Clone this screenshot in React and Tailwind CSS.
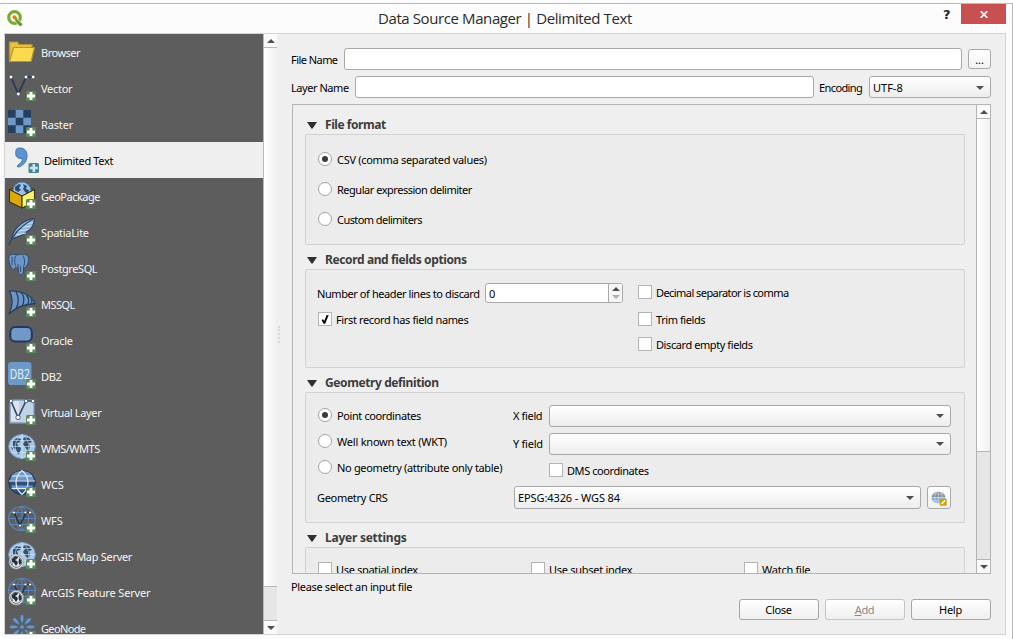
import React from "react";

const Plus = () => (
  <g>
    <rect x="18" y="17" width="10" height="10" rx="1.5" fill="#5a8c5a" />
    <path d="M23 18v8M19 22h8" stroke="#fff" strokeWidth="2.800" />
  </g>
);

const Continents = () => (
  <path
    d="M5 7l4-3 4 1-1 3-3 1 1 3 3 2-1 4-2 3-2-5-3-3zM16 3l5 1 3 4-3 1 1 4-2 4-3-4-2-3 2-3-2-1zM3 12l2 3-1 1z"
    fill="#32506f"
  />
);

const Globe = () => (
  <g>
    <ellipse cx="14" cy="12.5" rx="13.3" ry="12" fill="#a9c8e8" stroke="#6f98c8" />
    <Continents />
    <path d="M1 12.5h26M3 6.5h22M3 18.5h22M14 .5v24M14 .5c-9 7-9 17 0 24M14 .5c9 7 9 17 0 24" stroke="#d5e5f5" strokeWidth=".6" fill="none" />
  </g>
);

const WireGlobe = () => (
  <g fill="none">
    <ellipse cx="14" cy="12.5" rx="13.3" ry="12" stroke="#5c86bd" strokeWidth="1.2" />
    <path d="M1 12.5h26M3 6.5h22M3 18.5h22M14 .5v24M14 .5c-9 7-9 17 0 24M14 .5c9 7 9 17 0 24" stroke="#5c86bd" strokeWidth="1" />
    <path d="M6 6.5l6 13 6-13h5" stroke="#25364d" strokeWidth="1.7" />
    <g fill="#fff"><circle cx="6" cy="6.5" r="1.1" /><circle cx="12" cy="19.5" r="1.1" /><circle cx="17.5" cy="6.5" r="1.1" /><circle cx="22" cy="6.5" r="1.1" /></g>
  </g>
);

const EsriBadge = () => (
  <g>
    <circle cx="8.3" cy="19.8" r="7.2" fill="#f2f2f2" stroke="#9a9a9a" strokeWidth=".8" />
    <circle cx="8.3" cy="19.8" r="5.6" fill="#e8edf2" stroke="#3b4652" strokeWidth=".8" />
    <path d="M4 17l3-2.500 3 .5-1 2-2 1 2 1 1 2-2 3-2-3-2-1zM11 16l2 2 .5 3-2 2-1-3zM3.400 20l2 3-1-.6z" fill="#22303f" />
  </g>
);

const icons = {
  folder: (
    <g strokeLinejoin="round">
      <path d="M1.500 20.500V4h8l1.500 2.500h13v4" fill="#e8c33f" stroke="#b8952c" strokeWidth="1.200" />
      <path d="M1.500 23.500L5.500 9.500h21l-3.500 14z" fill="#fcd94f" stroke="#b8952c" strokeWidth="1.200" />
      <path d="M1.500 4v19" stroke="#b8952c" strokeWidth="1.200" />
    </g>
  ),
  vector: (
    <g>
      <path d="M3 3l7.300 17L18 3h7" fill="none" stroke="#2b3b52" strokeWidth="1.900" />
      <g fill="#fff" stroke="#39485e" strokeWidth=".8"><circle cx="3" cy="3" r="1.900" /><circle cx="10.300" cy="20" r="1.900" /><circle cx="18" cy="3" r="1.900" /><circle cx="25.200" cy="3" r="1.900" /></g>
      <Plus />
    </g>
  ),
  raster: (
    <g>
      <path d="M0 0h23v23H0z" fill="#7099c8" />
      <path d="M0 0h7.700v7.700H0zM15.300 0H23v7.700h-7.700zM7.700 7.700h7.600v7.600H7.700zM0 15.300h7.700V23H0zM15.300 15.300H23V23h-7.700z" fill="#25405f" />
      <Plus />
    </g>
  ),
  comma: (
    <g>
      <path d="M6 2.600C9 1.200 15.600 2 16 8.500c.3 6.500-3 10.500-8 12.500-1.600.5-2.300-1-1-2 3.200-2 4.500-4 4.300-6.500-4.300.5-6.800-2-6.600-5C4.800 5.500 5 3.500 6 2.600z" fill="#5b94d2" stroke="#3c6ea8" strokeWidth=".9" />
      <rect x="17.500" y="17" width="10.500" height="10" rx="1.500" fill="#45858c" />
      <path d="M22.800 18v8M18.800 22h8" stroke="#c8e6f6" strokeWidth="2.600" />
    </g>
  ),
  geopackage: (
    <g strokeLinejoin="round">
      <path d="M1.500 7.500L14 3l12.500 4.500L14 14z" fill="#8a6a00" stroke="#4a3b05" />
      <circle cx="14" cy="9" r="9" fill="#9dc1e6" stroke="#4f78a8" strokeWidth=".8" />
      <path d="M7 5l4-3 2 1-2 3 2 2-3 2-3-2zM15 2l4 2-1 3 3 1-1 4-3-2-2-3 1-2zM9 12l3 1v3z" fill="#2b4c75" />
      <path d="M1.500 7.500V20L14 26V14z" fill="#dba908" stroke="#3d3208" strokeWidth="1.100" />
      <path d="M26.500 7.500V20L14 26V14z" fill="#fdf373" stroke="#3d3208" strokeWidth="1.100" />
      <Plus />
    </g>
  ),
  feather: (
    <g>
      <path d="M4 20C5 11 14 3 26 0c.5 6-1 10-6 13-4 2.600-8 6-14 7z" fill="#8eb4dc" stroke="#2a4566" strokeWidth="1.200" />
      <path d="M8 17l10-2M10 13l10-1.500M13 9.500l10-1.500M17 6l8-1.500" stroke="#d9e8f6" strokeWidth="1" />
      <path d="M.8 27C4 18 13 8 25 1" stroke="#2a4566" strokeWidth="1.300" fill="none" />
      <Plus />
    </g>
  ),
  elephant: (
    <g stroke="#2c4870" strokeWidth="1" fill="#6c96c6" strokeLinejoin="round">
      <path d="M1 2c2-2.500 6-2 8-1 3-1 9-1.500 11 1 1.500 3 .5 8-2 11-1 1.500-2 1-2.400 0V18c0 3-4.600 3.500-5 .5L10 13c-1 1.500-2 1-2.500.5-1 2-3 2.500-4 .5C1 10 0 5 1 2z" />
      <path d="M8 1.500c-2 3-1.500 8 0 11M15 1.500c2 3 2 8 .6 11M10 13v-3M4 3v8M12.500 12v6" fill="none" strokeWidth=".9" />
      <g stroke="none"><Plus /></g>
    </g>
  ),
  mssql: (
    <g>
      <path d="M1.500.8C12 .5 23 4 27 13.500 18 14 9 16 1 24c4-8 4.500-15 .5-23.200z" fill="#6b95c6" stroke="#24405f" strokeWidth="1.300" />
      <path d="M8 1.500c3 6 3 12 0 17M13.500 2.500c3 4.500 3 8.500 1 13M18.500 5c2.500 3 2.600 6 1.500 9.500M23 8.500c1 2 1.200 3.500.8 5.200" stroke="#24405f" strokeWidth="1.300" fill="none" />
      <Plus />
    </g>
  ),
  oracle: (
    <g>
      <rect x="2.300" y="1" width="21.500" height="14.500" rx="5" fill="#7397c9" stroke="#203a5c" strokeWidth="2" />
      <Plus />
    </g>
  ),
  db2: (
    <g>
      <rect x="0" y="0" width="23.500" height="23" rx="3" fill="#6c99c8" />
      <text x="11.800" y="17" textAnchor="middle" fontSize="14.500" letterSpacing="0" fill="#eef4fa" fontFamily="Open Sans" textLength="20" lengthAdjust="spacingAndGlyphs">DB2</text>
      <Plus />
    </g>
  ),
  virtual: (
    <g>
      <rect x="2" y="2" width="24" height="23" fill="#c3d3e6" stroke="#7a9cc4" strokeWidth="1.300" />
      <path d="M3 3h8v20H3z" fill="#dde4ee" />
      <path d="M3 3l7 16.500L18 3h7" fill="none" stroke="#334c6d" strokeWidth="1.700" />
      <g fill="#fff" stroke="#39485e" strokeWidth=".8"><circle cx="3" cy="3" r="1.800" /><circle cx="10" cy="19.500" r="2.200" /><circle cx="18" cy="3" r="1.800" /><circle cx="25" cy="3" r="1.800" /></g>
      <Plus />
    </g>
  ),
  wms: (<g><Globe /><Plus /></g>),
  wcs: (
    <g>
      <ellipse cx="14" cy="12.500" rx="13.300" ry="12" fill="#2b507c" stroke="#1f3450" />
      <path d="M2 10.500C3 4 8 1 14 1s11 3 12 9.500zM3 15.500h22l-2 4H5z" fill="#6d98ca" />
      <path d="M1 11h26M3.500 18.500h21M14 .5c-8 7-8 17 0 24M14 .5c8 7 8 17 0 24M4 6h20" stroke="#e3edf7" strokeWidth="1.200" fill="none" />
      <Plus />
    </g>
  ),
  wfs: (<g><WireGlobe /><Plus /></g>),
  arcmap: (<g><Globe /><EsriBadge /><Plus /></g>),
  arcfeature: (<g><WireGlobe /><EsriBadge /><Plus /></g>),
  geonode: (
    <g>
      <g fill="#6b97cb" stroke="#3d6797" strokeWidth=".6">
        {[0, 45, 90, 135, 180, 225, 270, 315].map((a) => (
          <path key={a} d="M14 9.500c-2.200-2.500-2.500-9 0-9s2.200 6.500 0 9z" transform={`rotate(${a} 14 13)`} />
        ))}
      </g>
      <circle cx="14" cy="13" r="2" fill="#5f8fc8" />
      <Plus />
    </g>
  ),
};

const sources = [
  ["Browser", "folder", "tracking-[-0.5px]"],
  ["Vector", "vector", "tracking-[-0.3px]"],
  ["Raster", "raster", ""],
  ["Delimited Text", "comma", "tracking-[-0.35px]"],
  ["GeoPackage", "geopackage", "tracking-[-0.5px]"],
  ["SpatiaLite", "feather", "tracking-[-0.3px]"],
  ["PostgreSQL", "elephant", "tracking-[-0.4px]"],
  ["MSSQL", "mssql", "tracking-[-0.55px]"],
  ["Oracle", "oracle", "tracking-[-0.3px]"],
  ["DB2", "db2", "tracking-[-0.4px]"],
  ["Virtual Layer", "virtual", "tracking-[-0.35px]"],
  ["WMS/WMTS", "wms", "tracking-[-0.5px]"],
  ["WCS", "wcs", ""],
  ["WFS", "wfs", ""],
  ["ArcGIS Map Server", "arcmap", "tracking-[-0.3px]"],
  ["ArcGIS Feature Server", "arcfeature", ""],
  ["GeoNode", "geonode", "tracking-[-0.65px]"],
];

const Arrow = ({ up, faded }) => (
  <svg width="8" height="4" viewBox="0 0 8 4" className="block shrink-0">
    <path d={up ? "M0 4L4 0l4 4z" : "M0 0h8L4 4z"} fill={faded ? "#b0b0b0" : "#4f4f4f"} />
  </svg>
);

const Radio = ({ checked }) => (
  <span className="flex size-[14px] shrink-0 items-center justify-center rounded-full border border-[#a3a3a3] bg-white">
    {checked && <span className="size-[6px] rounded-full bg-[#3a3a3a]" />}
  </span>
);

const Check = ({ checked }) => (
  <span className="flex size-[14px] shrink-0 items-center justify-center border border-[#b4b4b4] bg-white">
    {checked && (
      <svg width="8" height="9" viewBox="0 0 8 9">
        <path d="M.5 5l1.500-.8L3.300 6 5.500.3 7.700 0 4.200 8.800H2.600z" fill="#000" />
      </svg>
    )}
  </span>
);

const Option = ({ kind, checked, children, className = "" }) => (
  <label className={`flex items-center whitespace-nowrap ${className}`}>
    {kind === "radio" ? <Radio checked={checked} /> : <Check checked={checked} />}
    <span className={kind === "radio" ? "ml-[5px] mt-[2px]" : "ml-[4px] mt-[2px]"}>{children}</span>
  </label>
);

const Combo = ({ children, className = "" }) => (
  <div className={`flex items-center justify-between rounded-[3px] border border-[#a9a9a9] bg-linear-to-b from-white to-[#ededed] pl-[3px] pr-[6px] ${className}`}>
    <span>{children}</span>
    <Arrow />
  </div>
);

const Group = ({ title, tracking, children, className = "" }) => (
  <section className="mb-[4px] flex shrink-0 flex-col">
    <div className="flex h-[20px] items-center pl-[2px] text-[12px] font-bold text-[#3d3d3d]">
      <svg width="10" height="7" viewBox="0 0 10 7" className="mt-[2px] shrink-0">
        <path d="M0 0h10L5.600 6.500H4.400z" fill="#2f2f2f" />
      </svg>
      <span className={`ml-[8px] mt-[1px] ${tracking}`}>{title}</span>
    </div>
    <div className={`rounded-[2px] border border-[#d2d2d2] bg-[#ececec] ${className}`}>{children}</div>
  </section>
);

const PushButton = ({ children, disabled }) => (
  <button className={`flex h-[21px] w-[80px] items-center justify-center rounded-[3px] border bg-linear-to-b from-white to-[#efefef] pr-px tracking-[-0.3px] ${disabled ? "border-[#c4c4c4] text-[#8a8a8a]" : "border-[#a6a6a6]"}`}>
    <span>{children}</span>
  </button>
);

export default function App() {
  return (
    <div className="flex h-[639px] w-[1013px] flex-col overflow-hidden bg-[#fcfcfc] pt-[3px] font-['Noto_Sans',sans-serif] text-[11px] leading-[14px] tracking-[-0.15px] text-black">
      <div className="flex flex-1 flex-col border-r border-t border-[#b9b9b9] pl-[4px]">
        <header className="flex h-[29px] shrink-0 items-start pl-[3px]">
          <svg width="17" height="17" viewBox="0 0 17 17" className="mt-[6px]">
            <circle cx="7.500" cy="7.500" r="5.800" fill="none" stroke="#7cab30" strokeWidth="3.200" />
            <path d="M7 7.500l3.200-.3.300 2.300 5.300 4.500-.8 2-2.500.3L8 11z" fill="#5f9c2c" stroke="#fcfcfc" strokeWidth=".6" />
            <circle cx="7.500" cy="7.300" r="2" fill="#ee7913" />
          </svg>
          <h1 className="flex-1 pl-[354px] pt-[3px] font-['Open_Sans',sans-serif] text-[15px] leading-[22px] tracking-[-0.4px] text-[#2b2b2b]">Data Source Manager | Delimited Text</h1>
          <span className="w-[18px] pt-[2px] font-['DejaVu_Sans',sans-serif] text-[13px] font-bold leading-[18px] text-[#222]">?</span>
          <button className="mr-[6px] flex h-[20px] w-[45px] items-center justify-center bg-[#c75050]">
            <svg width="8" height="7" viewBox="0 0 8 7"><path d="M.7.200l6.600 6.600M7.300.200L.7 6.800" stroke="#fff" strokeWidth="1.700" /></svg>
          </button>
        </header>
        <div className="flex h-[602px] w-[1002px] shrink-0 border border-[#d4d4d4] bg-[#efefef]">
          <nav className="flex h-[600px] w-[258px] shrink-0 flex-col overflow-hidden bg-[#5d5d5d]">
            {sources.map(([name, icon, tracking]) => (
              <div key={name} className={`flex h-[36px] shrink-0 items-start ${icon === "comma" ? "bg-[#efefef] pl-[6px] text-black" : "pl-[3px] text-[#f6f6f6]"}`}>
                <svg width="29" height="28" viewBox="0 0 29 28" className="mt-[4px] shrink-0">{icons[icon]}</svg>
                <span className={`ml-[4px] mt-[12px] ${tracking}`}>{name}</span>
              </div>
            ))}
          </nav>
          <div className="flex w-[14px] shrink-0 flex-col border-l border-[#b9b9b9] bg-[#e6e6e6]">
            <div className="flex h-[14px] items-center justify-center border-b border-[#b9b9b9] bg-[#fafafa]"><Arrow up /></div>
            <div className="flex-1 border-b border-[#b9b9b9] bg-linear-to-r from-white to-[#f0f0f0]" />
            <div className="h-[33px]" />
            <div className="flex h-[14px] items-center justify-center border-t border-[#b9b9b9] bg-[#fafafa]"><Arrow /></div>
          </div>
          <div className="flex w-[14px] shrink-0 items-center pl-[1px]">
            <div className="h-[17px] border-l-2 border-dotted border-[#d9d9d9]" />
          </div>
          <main className="flex w-[700px] shrink-0 flex-col pt-[14px]">
            <div className="flex h-[22px] items-center">
              <span className="w-[53px] pt-[2px] tracking-[-0.55px]">File Name</span>
              <div className="h-[22px] w-[618px] rounded-[3px] border border-[#a9a9a9] bg-white" />
              <button className="ml-[6px] flex h-[20px] w-[23px] items-end justify-center rounded-[3px] border border-[#a9a9a9] bg-linear-to-b from-white to-[#f2f2f2] pb-px">...</button>
            </div>
            <div className="mt-[6px] flex h-[22px] items-center">
              <span className="w-[64px] pt-[2px] tracking-[-0.45px]">Layer Name</span>
              <div className="h-[22px] w-[459px] rounded-[3px] border border-[#a9a9a9] bg-white" />
              <span className="ml-[5px] w-[50px] pt-[2px] tracking-[-0.6px]">Encoding</span>
              <Combo className="h-[22px] w-[122px] pt-px tracking-[0px]">UTF-8</Combo>
            </div>
            <div className="ml-px mt-[6px] flex h-[470px] shrink-0 border border-[#b4b4b4]">
              <div className="flex h-[468px] w-[683px] flex-col overflow-hidden pl-[12px] pr-[11px] pt-[9px]">
                <Group title="File format" tracking="tracking-[-0.45px]" className="h-[111px] pl-[12px] pt-[9px]">
                  <Option kind="radio" checked className="h-[30px] tracking-[-0.3px]">CSV (comma separated values)</Option>
                  <Option kind="radio" className="h-[30px] tracking-[-0.48px]">Regular expression delimiter</Option>
                  <Option kind="radio" className="h-[30px] tracking-[-0.56px]">Custom delimiters</Option>
                </Group>
                <Group title="Record and fields options" tracking="tracking-[-0.38px]" className="flex h-[99px] pl-[11px] pt-[13px]">
                  <div className="flex w-[321px] flex-col">
                    <div className="flex h-[20px] items-center">
                      <span className="w-[168px] whitespace-nowrap pt-[2px] tracking-[-0.42px]">Number of header lines to discard</span>
                      <div className="flex h-[20px] w-[138px] overflow-hidden rounded-[3px] border border-[#a9a9a9] bg-white">
                        <span className="flex-1 pl-[3px] pt-[3px]">0</span>
                        <div className="flex w-[14px] flex-col items-center justify-center gap-[4px] border-l border-[#a9a9a9] bg-[#f6f6f6]"><Arrow up /><Arrow faded /></div>
                      </div>
                    </div>
                    <Option checked className="ml-px mt-[9px] h-[14px] tracking-[-0.37px]">First record has field names</Option>
                  </div>
                  <div className="flex flex-col pt-[2px]">
                    <Option className="h-[14px] tracking-[-0.56px]">Decimal separator is comma</Option>
                    <Option className="mt-[13px] h-[14px] tracking-[-0.43px]">Trim fields</Option>
                    <Option className="mt-[11px] h-[14px] tracking-[-0.42px]">Discard empty fields</Option>
                  </div>
                </Group>
                <Group title="Geometry definition" tracking="tracking-[-0.4px]" className="h-[131px] pl-[11px] pt-[12px]">
                  <div className="flex h-[81px]">
                    <div className="flex w-[196px] flex-col pl-px pt-[3px]">
                      <Option kind="radio" checked className="h-[14px] tracking-[-0.4px]">Point coordinates</Option>
                      <Option kind="radio" className="mt-[12px] h-[14px] tracking-[-0.22px]">Well known text (WKT)</Option>
                      <Option kind="radio" className="mt-[12px] h-[14px] tracking-[-0.33px]">No geometry (attribute only table)</Option>
                    </div>
                    <div className="flex flex-col">
                      <div className="flex items-center"><span className="w-[36px] tracking-[-0.35px]">X field</span><Combo className="h-[22px] w-[402px]" /></div>
                      <div className="mt-[6px] flex items-center"><span className="w-[36px] tracking-[-0.25px]">Y field</span><Combo className="h-[22px] w-[402px]" /></div>
                      <Option className="ml-[36px] mt-[8px] h-[14px] tracking-[-0.42px]">DMS coordinates</Option>
                    </div>
                  </div>
                  <div className="flex items-center">
                    <span className="w-[197px] tracking-[-0.3px]">Geometry CRS</span>
                    <Combo className="h-[23px] w-[407px] tracking-[-0.1px]">EPSG:4326 - WGS 84</Combo>
                    <button className="ml-[6px] flex h-[23px] w-[24px] items-center justify-center rounded-[3px] border border-[#a9a9a9] bg-linear-to-b from-white to-[#f0f0f0]">
                      <svg width="16" height="16" viewBox="0 0 16 16">
                        <path d="M.3 7.500a7.300 7 0 0 1 14.400 0z" fill="#8b9096" />
                        <path d="M.3 7.500a7.300 7 0 0 0 14.400 0z" fill="#7fb3e2" />
                        <path d="M.3 7.500h14.400M2 4h11M2 11h11M7.500.5v14M7.500.5c-5 4-5 10 0 14M7.500.5c5 4 5 10 0 14" fill="none" stroke="#dde5ec" strokeWidth=".5" />
                        <rect x="8.700" y="8.700" width="7" height="7" rx="1" fill="#cfa30c" />
                        <path d="M10.500 14l3.500-3.500" stroke="#fff" strokeWidth="1.500" />
                      </svg>
                    </button>
                  </div>
                </Group>
                <Group title="Layer settings" tracking="tracking-[-0.25px]" className="flex h-[80px] pl-[12px] pt-[14px]">
                  <Option className="h-[14px] w-[213px] tracking-[-0.33px]">Use spatial index</Option>
                  <Option className="h-[14px] w-[213px] tracking-[-0.28px]">Use subset index</Option>
                  <Option className="h-[14px] tracking-[-0.25px]">Watch file</Option>
                </Group>
              </div>
              <div className="flex w-[14px] shrink-0 flex-col border-l border-[#b4b4b4] bg-[#e6e6e6]">
                <div className="flex h-[14px] items-center justify-center border-b border-[#b4b4b4] bg-[#fafafa]"><Arrow up /></div>
                <div className="h-[333px] border-b border-[#b4b4b4] bg-linear-to-r from-white to-[#f0f0f0]" />
                <div className="flex-1" />
                <div className="flex h-[14px] items-center justify-center border-t border-[#b4b4b4] bg-[#fafafa]"><Arrow /></div>
              </div>
            </div>
            <p className="mt-[6px] h-[14px] tracking-[-0.34px]">Please select an input file</p>
            <div className="mt-[5px] flex justify-end gap-[6px]">
              <PushButton>Close</PushButton>
              <PushButton disabled><u>A</u>dd</PushButton>
              <PushButton>Help</PushButton>
            </div>
          </main>
        </div>
      </div>
    </div>
  );
}
